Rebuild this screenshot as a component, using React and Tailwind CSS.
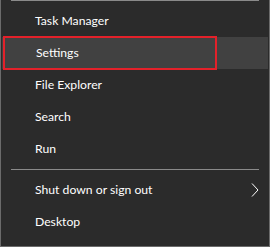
export default function App() {
  const Row = ({ label, children }) => (
    <div className="flex h-[32px] items-center justify-between pl-[34px] pr-[10px]">
      <span>{label}</span>
      {children}
    </div>
  );
  return (
    <div
      className="relative w-[270px] h-[247px] bg-[#2b2b2b] border-l border-r border-b border-[#6b6b6b] text-[12.2px] text-white pb-[8px]"
      style={{ fontFamily: 'Lato, "Noto Sans", sans-serif' }}
    >
      <div className="mx-[10px] h-px bg-[#8a8a8a]" />
      <div className="mt-[4px]">
        <Row label="Task Manager" />
        <div className="mx-[1px] bg-[#414141] mr-[1px]">
          <Row label="Settings" />
        </div>
        <Row label="File Explorer" />
        <Row label="Search" />
        <Row label="Run" />
      </div>
      <div className="mx-[10px] my-[4px] h-px bg-[#8a8a8a]" />
      <Row label="Shut down or sign out">
        <svg width="8" height="14" viewBox="0 0 8 14">
          <polyline points="1,0.5 7,7 1,13.5" fill="none" stroke="#ffffff" strokeWidth="1" />
        </svg>
      </Row>
      <Row label="Desktop" />
      <div className="absolute left-[2px] top-[36px] w-[214px] h-[34px] border-2 border-[#e3212a]" />
    </div>
  );
}
